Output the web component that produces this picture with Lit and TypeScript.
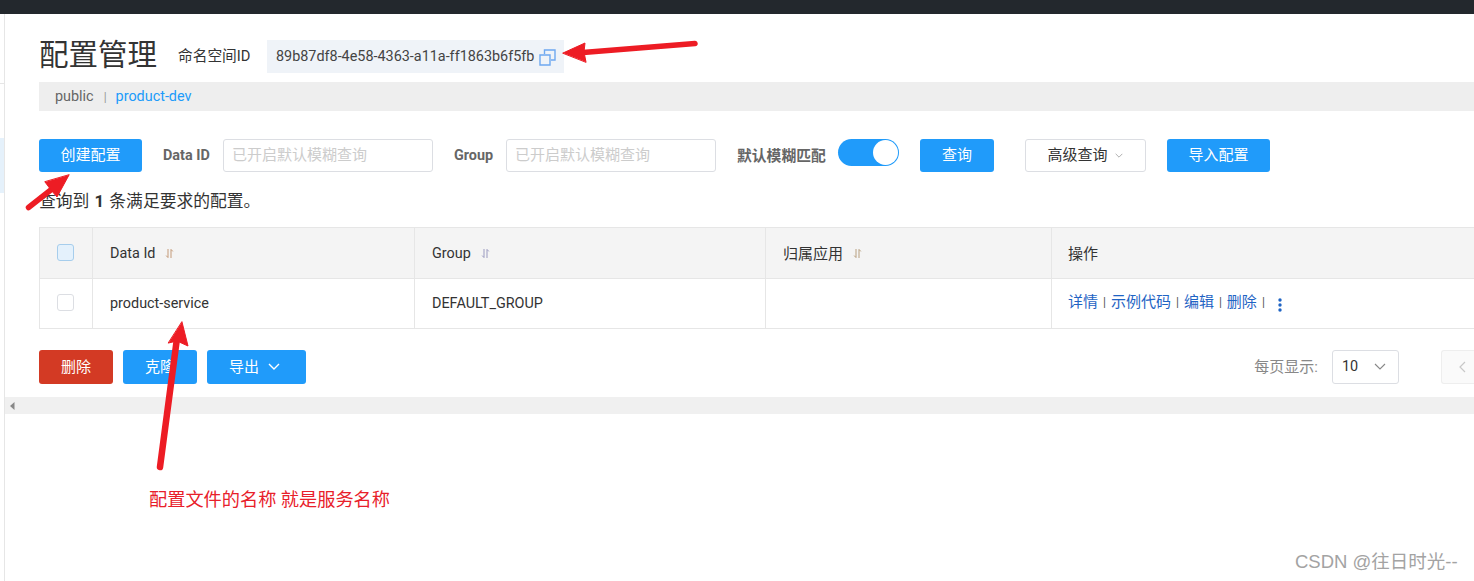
import { LitElement, html, css, svg } from "lit";
import { customElement } from "lit/decorators.js";

const sortIcon = (c: string) => html`<svg class="sort" width="9" height="11" viewBox="0 0 9 11"><path d="M3 1v8.5M1.2 7.6 3 9.6M6 10V1.5M6 1.4 7.8 3.4" fill="none" stroke="${c}" stroke-width="1"/></svg>`;
const chev = (w: number, h: number, c: string, sw = 1.2) => html`<svg width="${w}" height="${h}" viewBox="0 0 12 7"><path d="M1 1l5 5 5-5" fill="none" stroke="${c}" stroke-width="${sw}"/></svg>`;

@customElement("app-root")
export class AppRoot extends LitElement {
  static styles = css`
    :host { display: block; width: 1474px; height: 581px; overflow: hidden; position: relative; background: #fff;
      font-family: Roboto, "Noto Sans CJK SC", sans-serif; font-size: 14.4px; line-height: 20px; color: #333; }
    .cjk { font-size: 15px; }
    .top { height: 14px; background: #23282d; }
    .body { display: flex; height: 567px; }
    .side { width: 4px; border-right: 1px solid #e6e6e6; display: flex; flex-direction: column; flex: none; }
    .side .a { height: 69px; border-bottom: 1px solid #e6e6e6; }
    .side .gap { height: 54px; }
    .side .hl { height: 55px; background: #e5f1fb; }
    .main { flex: 1; min-width: 0; display: flex; flex-direction: column; }
    .pad { padding-left: 34px; display: flex; flex-direction: column; }
    .head { display: flex; align-items: center; height: 33px; margin-top: 26px; }
    h1 { margin: 0 0 2px; font-weight: 400; font-size: 29.5px; line-height: 31px; color: #333; width: 139px; white-space: nowrap; }
    .nsl { width: 89px; color: #333; white-space: nowrap; font-size: 14.7px; padding-bottom: 2px; }
    .chip { width: 297px; height: 33px; background: #eff3f8; display: flex; align-items: center; padding: 0 0 0 9px; box-sizing: border-box; gap: 5px; color: #444; white-space: nowrap; }
    .chip svg { flex: none; margin-bottom: -1px; }
    .ns { height: 29px; margin-top: 9px; background: #eee; padding: 0 0 0 16px; box-sizing: border-box; display: flex; align-items: center; color: #666; }
    .ns i { font-style: normal; color: #999; margin: 0 9px 0 10px; font-size: 12px; }
    .ns b { font-weight: 400; color: #209bfa; font-size: 14.4px; }
    .filters { display: flex; align-items: center; height: 33px; margin-top: 28px; }
    .btn { display: flex; align-items: center; justify-content: center; background: #209bfa; color: #fff; border-radius: 3px; height: 33px; box-sizing: border-box; flex: none; white-space: nowrap; padding-bottom: 1px; }
    .lbl { font-weight: 700; color: #666; white-space: nowrap; flex: none; }
    .inp { height: 33px; width: 210px; box-sizing: border-box; border: 1px solid #dcdee3; border-radius: 3px; color: #ccc; padding: 0 0 1px 8px; display: flex; align-items: center; flex: none; }
    .toggle { width: 61px; height: 27px; box-sizing: border-box; border-radius: 14px; background: #209bfa; flex: none; display: flex; justify-content: flex-end; align-items: center; padding-right: 1px; margin-top: -6px; }
    .toggle span { width: 25px; height: 25px; border-radius: 50%; background: #fff; }
    .adv { display: flex; align-items: center; justify-content: center; gap: 7px; width: 121px; height: 33px; box-sizing: border-box; border: 1px solid #dcdee3; border-radius: 3px; color: #333; background: #fff; flex: none; padding: 0 1px 1px 0; }
    .result { margin-top: 19px; height: 20px; font-size: 16.8px; color: #333; white-space: nowrap; }
    .result strong { font-weight: 700; margin: 0 1px; }
    .table { margin-top: 16px; border: solid #e6e6e6; border-width: 1px 0 1px 1px; display: grid; grid-template-columns: 53px 322px 351px 286px 1fr; }
    .cell { display: flex; align-items: center; box-sizing: border-box; padding-left: 17px; border-right: 1px solid #e6e6e6; color: #333; white-space: nowrap; }
    .cell:nth-child(5n) { border-right: 0; padding-left: 16px; }
    .th { height: 51px; background: #f4f4f4; border-bottom: 1px solid #e6e6e6; padding-top: 1px; }
    .tr { height: 49px; }
    .sort { margin-left: 10px; }
    .cb { width: 17px; height: 17px; box-sizing: border-box; border-radius: 3px; border: 1px solid #dcdee3; background: #fff; margin-top: -2px; }
    .th .cb { margin-top: -3px; }
    .ops { color: #1f64c4; gap: 5px; padding-bottom: 3px; }
    .cb.on { background: #e4f1fc; border-color: #a6cdec; }
    .ops u { text-decoration: none; color: #555; font-size: 12px; }
    .dots { margin-left: 8px; margin-top: 5px; }
    .foot { display: flex; align-items: center; margin-top: 21px; height: 34px; }
    .foot .btn { height: 34px; }
    .red { background: #d33a24; }
    .pager { margin-left: auto; display: flex; align-items: center; }
    .pl { color: #888; margin-right: 14px; padding-bottom: 1px; }
    .sel { width: 67px; height: 34px; box-sizing: border-box; border: 1px solid #dcdee3; border-radius: 3px; display: flex; align-items: center; justify-content: space-between; padding: 0 12px 1px 9px; color: #333; }
    .prev { width: 40px; height: 34px; box-sizing: border-box; border: 1px solid #eee; background: #fafafa; border-radius: 3px 0 0 3px; border-right: 0; margin-left: 42px; margin-right: -7px; display: flex; align-items: center; padding-left: 17px; }
    .scroll { height: 17px; margin-top: 13px; background: #f0f0f0; display: flex; align-items: center; padding-left: 5px; }
    .note { position: absolute; left: 149px; top: 488px; color: #e8202a; font-size: 18.2px; line-height: 24px; white-space: nowrap; }
    .mark { position: absolute; left: 1295px; top: 550px; color: #a3a3a3; font-family: "Liberation Sans", "Noto Sans CJK SC", sans-serif; font-size: 18.5px; line-height: 24px; white-space: nowrap; }
    .arrows { position: absolute; inset: 0; pointer-events: none; }
  `;

  render() {
    return html`
      <div class="top"></div>
      <div class="body">
        <div class="side"><div class="a"></div><div class="gap"></div><div class="hl"></div></div>
        <div class="main">
          <div class="pad">
            <div class="head">
              <h1>配置管理</h1>
              <span class="nsl">命名空间ID</span>
              <div class="chip">89b87df8-4e58-4363-a11a-ff1863b6f5fb
                <svg width="17" height="17" viewBox="0 0 17 17"><path d="M1 6h10v10H1zM5.5 5V1H16v10h-4" fill="none" stroke="#6ea8f0" stroke-width="1.4"/></svg>
              </div>
            </div>
            <div class="ns">public<i>|</i><b>product-dev</b></div>
            <div class="filters">
              <div class="btn cjk" style="width:103px">创建配置</div>
              <span class="lbl" style="margin-left:21px;width:60px">Data ID</span>
              <div class="inp cjk">已开启默认模糊查询</div>
              <span class="lbl" style="margin-left:21px;width:52px">Group</span>
              <div class="inp cjk">已开启默认模糊查询</div>
              <span class="lbl" style="margin-left:21px;width:101px;font-size:14.8px">默认模糊匹配</span>
              <div class="toggle"><span></span></div>
              <div class="btn cjk" style="width:74px;margin-left:21px">查询</div>
              <div class="adv cjk" style="margin-left:31px">高级查询 ${chev(8, 5, "#888", 1)}</div>
              <div class="btn cjk" style="width:103px;margin-left:21px">导入配置</div>
            </div>
            <div class="result">查询到 <strong>1</strong> 条满足要求的配置。</div>
            <div class="table">
              <div class="cell th"><span class="cb on"></span></div>
              <div class="cell th">Data Id ${sortIcon("#c49a78")}</div>
              <div class="cell th">Group ${sortIcon("#9a9ac0")}</div>
              <div class="cell th cjk">归属应用 ${sortIcon("#b8a080")}</div>
              <div class="cell th cjk">操作</div>
              <div class="cell tr"><span class="cb"></span></div>
              <div class="cell tr">product-service</div>
              <div class="cell tr">DEFAULT_GROUP</div>
              <div class="cell tr"></div>
              <div class="cell tr ops cjk">详情<u>|</u>示例代码<u>|</u>编辑<u>|</u>删除<u>|</u>
                <svg class="dots" width="4" height="14" viewBox="0 0 4 14"><g fill="#1f64c4"><circle cx="2" cy="2" r="1.7"/><circle cx="2" cy="7" r="1.7"/><circle cx="2" cy="12" r="1.7"/></g></svg>
              </div>
            </div>
            <div class="foot">
              <div class="btn red cjk" style="width:74px">删除</div>
              <div class="btn cjk" style="width:74px;margin-left:10px">克隆</div>
              <div class="btn cjk" style="width:99px;margin-left:10px;gap:9px;padding-right:4px">导出 ${chev(12, 7, "#fff", 1.4)}</div>
              <div class="pager">
                <span class="pl cjk">每页显示:</span>
                <div class="sel">10 ${chev(12, 7, "#888", 1.1)}</div>
                <div class="prev"><svg width="7" height="12" viewBox="0 0 7 12"><path d="M6 1 1 6l5 5" fill="none" stroke="#c8c8c8" stroke-width="1.2"/></svg></div>
              </div>
            </div>
          </div>
          <div class="scroll"><svg width="5" height="8" viewBox="0 0 5 8"><path d="M4.5 0v8L0 4z" fill="#888"/></svg></div>
        </div>
      </div>
      <svg class="arrows" width="1474" height="581" viewBox="0 0 1474 581">
        ${svg`<g fill="#ed1c24" stroke="#ed1c24" stroke-linejoin="round" stroke-linecap="round">
          <path d="M695 43.500 583 52.500" stroke-width="5.500" fill="none"/>
          <path d="M563 53 585 43 584 52 586 62z" stroke-width="1"/>
          <path d="M28.500 207.500 52 189" stroke-width="5.500" fill="none"/>
          <path d="M69 175 57 197 51 190 45 182z" stroke-width="1"/>
          <path d="M160 467 176.500 342" stroke-width="6.500" fill="none"/>
          <path d="M182 322 188 346 177 341 168.500 343z" stroke-width="1"/>
        </g>`}
      </svg>
      <div class="note">配置文件的名称 就是服务名称</div>
      <div class="mark">CSDN @往日时光--</div>
    `;
  }
}
